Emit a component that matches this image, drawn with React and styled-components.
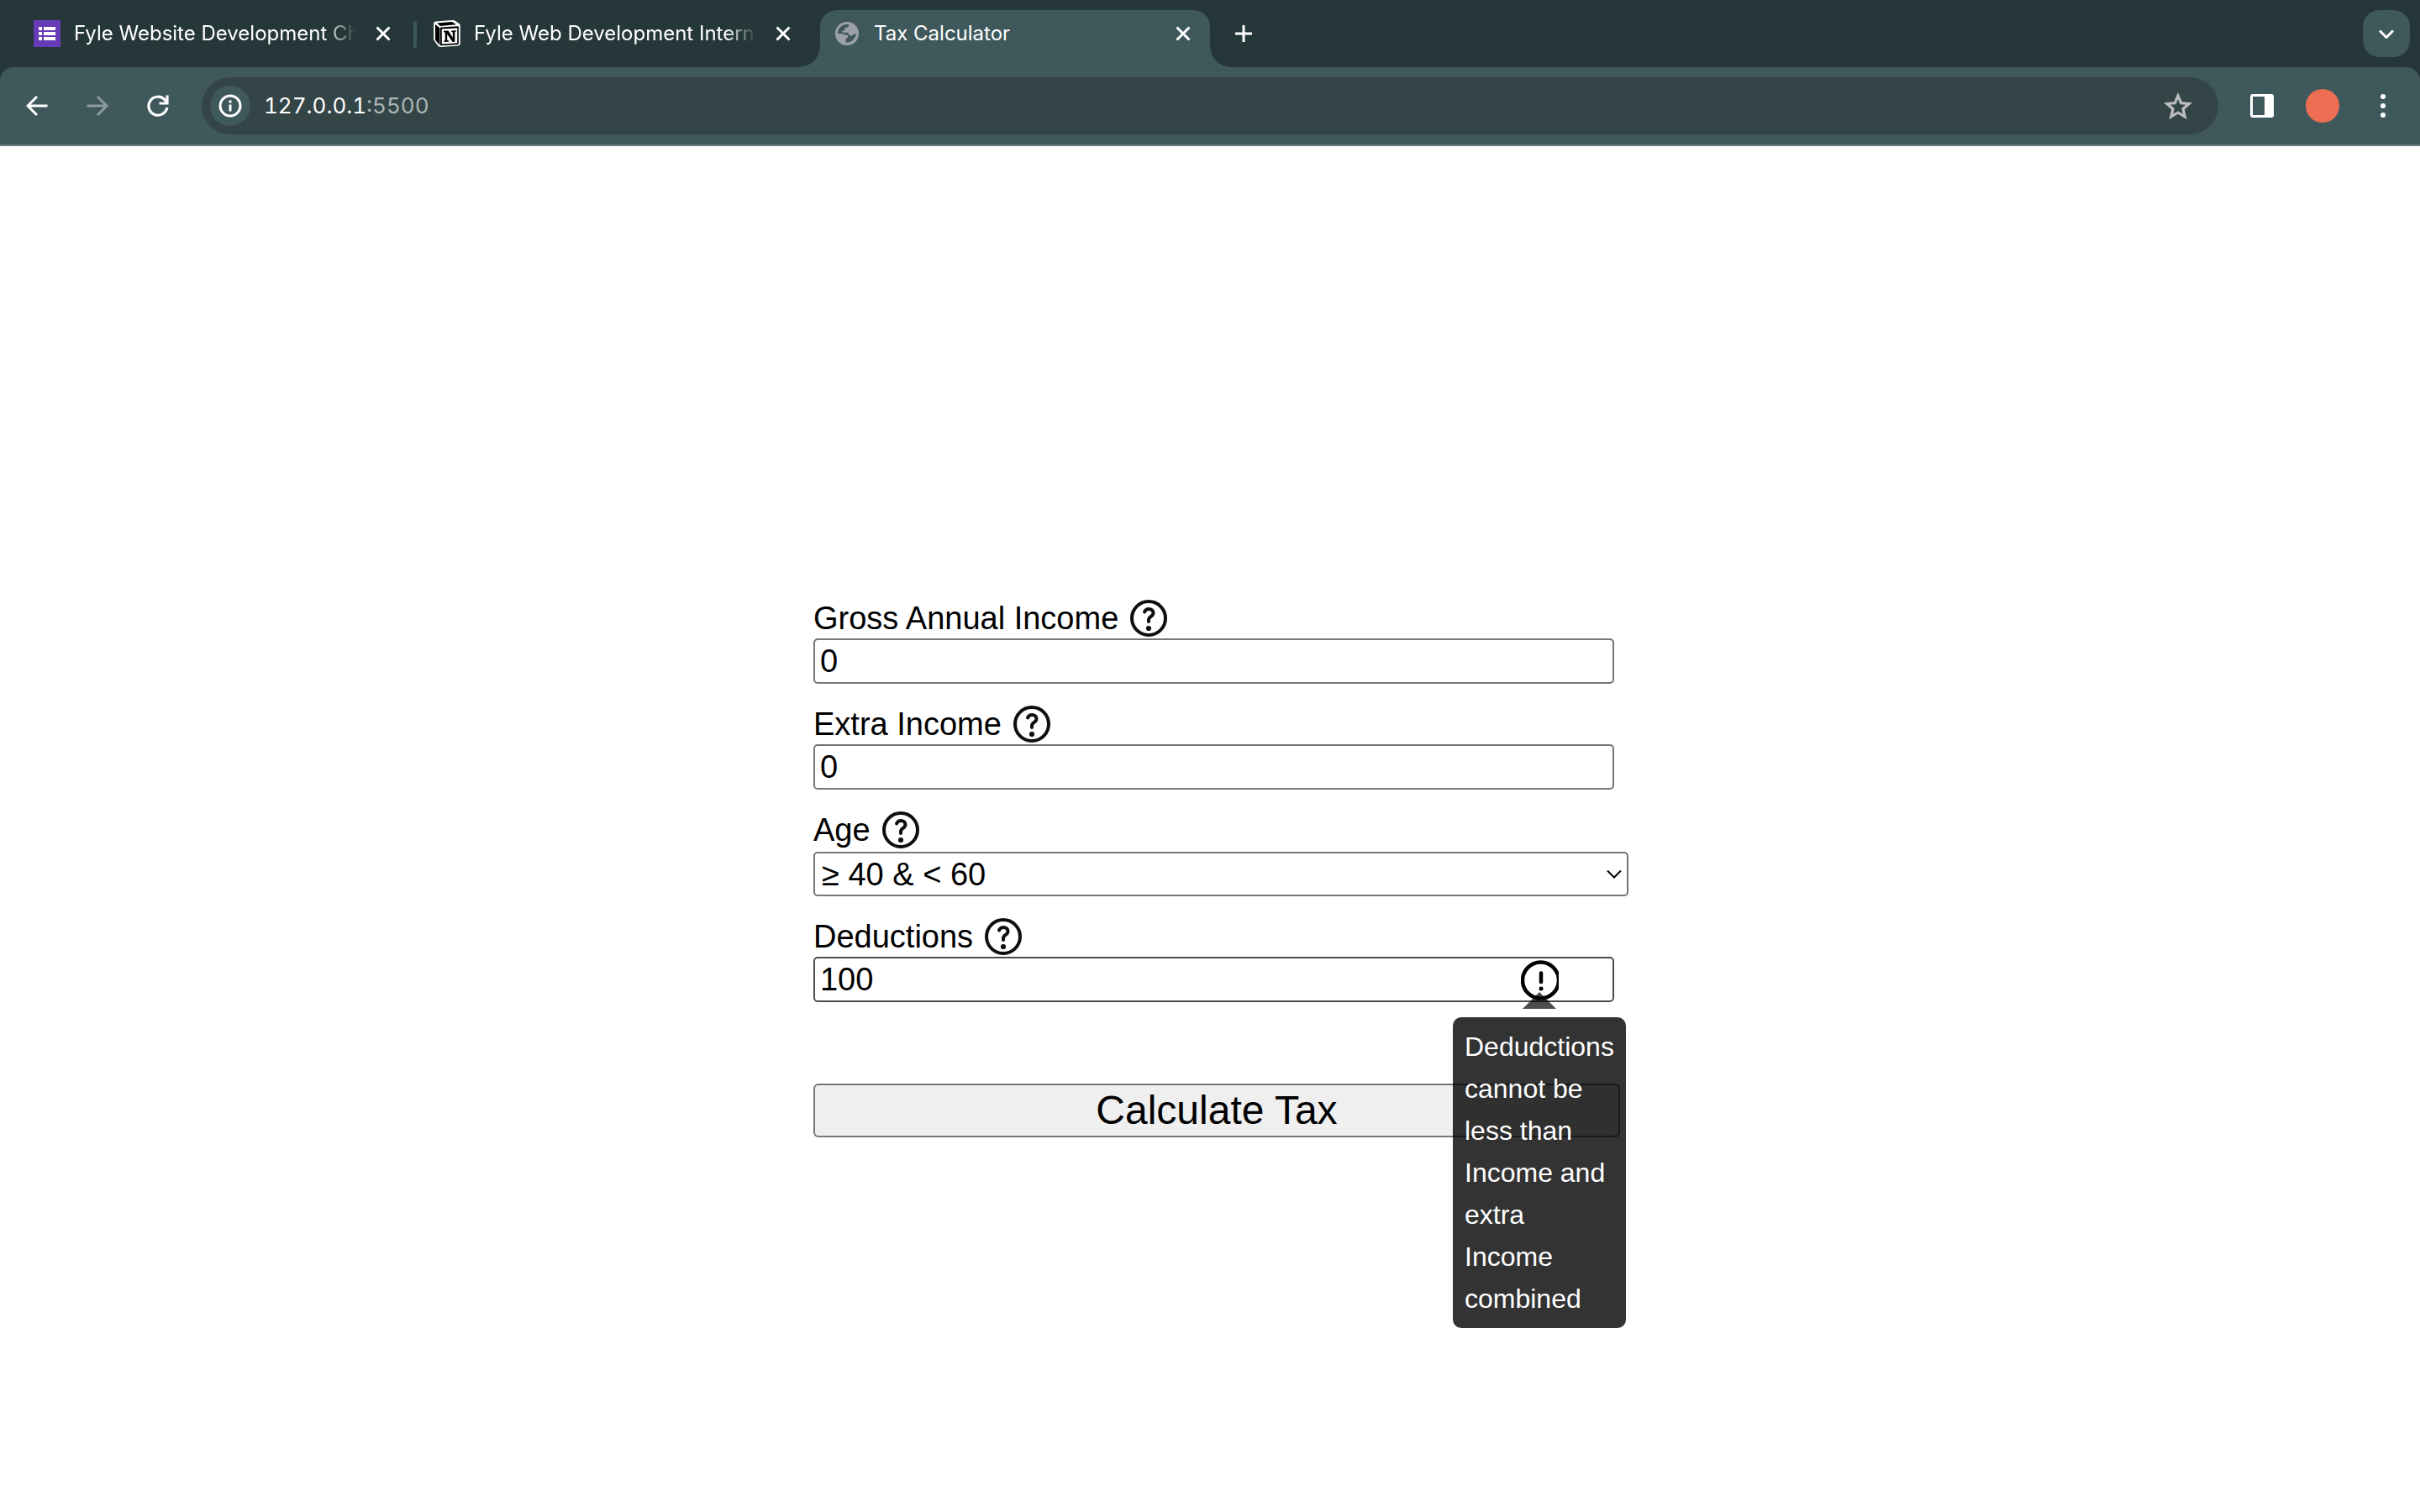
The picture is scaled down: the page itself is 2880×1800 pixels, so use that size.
import React, { useState } from "react";
import styled, { createGlobalStyle, css } from "styled-components";

const GlobalStyle = createGlobalStyle`
  * { box-sizing: border-box; }
  body { margin: 0; background: #fff; }
  button, input, select { font: inherit; margin: 0; }
`;

const uiFont = 'Inter, "Liberation Sans", sans-serif';
const pageFont = '"Liberation Sans", Arial, sans-serif';

const Window = styled.div`
  min-height: 100vh;
  display: flex;
  flex-direction: column;
`;

const TabStrip = styled.div`
  display: flex;
  align-items: flex-end;
  gap: 12px;
  height: 80px;
  padding: 0 12px 0 24px;
  background: #26373a;
  font-family: ${uiFont};
`;

const Tab = styled.div`
  position: relative;
  display: flex;
  align-items: center;
  gap: 16px;
  width: 464px;
  height: 68px;
  padding: 0 16px 12px;
  color: #fff;
  ${(p) =>
    p.$divider &&
    css`
      &::after {
        content: "";
        position: absolute;
        right: -8px;
        top: 13px;
        width: 4px;
        height: 32px;
        border-radius: 2px;
        background: #3f585b;
      }
    `}
  ${(p) =>
    p.$active &&
    css`
      background: #3f585b;
      border-radius: 20px 20px 0 0;
      &::before,
      &::after {
        content: "";
        position: absolute;
        bottom: 0;
        width: 24px;
        height: 24px;
      }
      &::before {
        right: 100%;
        background: radial-gradient(circle at 0 0, transparent 23px, #3f585b 24px);
      }
      &::after {
        left: 100%;
        background: radial-gradient(circle at 100% 0, transparent 23px, #3f585b 24px);
      }
    `}
`;

const TabTitle = styled.span`
  flex: 1;
  min-width: 0;
  overflow: hidden;
  white-space: nowrap;
  font-size: 24px;
  line-height: 32px;
  ${(p) => p.$fade && css`mask-image: linear-gradient(to right, #000 89%, transparent);`}
`;

const IconButton = styled.button`
  display: flex;
  align-items: center;
  justify-content: center;
  flex: none;
  width: ${(p) => p.$size}px;
  height: ${(p) => p.$size}px;
  padding: 0;
  border: 0;
  border-radius: ${(p) => p.$radius || 0}px;
  background: ${(p) => p.$fill || "transparent"};
  color: ${(p) => p.$color || "#fff"};
`;

const StripButton = styled(IconButton)`
  margin-bottom: 12px;
  ${(p) => p.$end && css`margin-left: auto;`}
`;

const ToolbarBack = styled.div`
  background: #26373a;
`;

const Toolbar = styled.div`
  display: flex;
  align-items: center;
  gap: 8px;
  padding: 12px;
  border-bottom: 2px solid #677f80;
  border-radius: 16px 16px 0 0;
  background: #3f585b;
  font-family: ${uiFont};
`;

const AddressBar = styled.div`
  flex: 1;
  display: flex;
  align-items: center;
  gap: 16px;
  height: 68px;
  margin: 0 12px;
  padding: 0 20px 0 10px;
  border-radius: 34px;
  background: #344548;
`;

const Url = styled.span`
  flex: 1;
  font-size: 26px;
  line-height: 36px;
  font-variant-numeric: tabular-nums;
  font-kerning: none;
  color: #fff;
  span { color: #aeb5b6; }
`;

const Avatar = styled.span`
  width: 40px;
  height: 40px;
  border-radius: 50%;
  background: #ed6e53;
`;

const Page = styled.main`
  flex: 1;
  padding-top: 540px;
  font-family: ${pageFont};
  font-size: 38px;
  color: #000;
`;

const Form = styled.form`
  width: calc(100% / 3);
  margin-left: calc(100% / 3 + 8px);
`;

const Field = styled.div`
  margin-bottom: 26px;
`;

const LabelRow = styled.div`
  display: flex;
  align-items: center;
  gap: 14px;
  padding-bottom: 2px;
  label { line-height: 44px; }
`;

const control = css`
  display: block;
  height: 54px;
  padding: 0 6px;
  border: 2px solid ${(p) => (p.$strong ? "#4c4c4c" : "#767676")};
  border-radius: 5px;
  background: #fff;
  color: #000;
  outline: none;
`;

const TextInput = styled.input`
  ${control}
  width: 100%;
`;

const InputWrap = styled.div`
  position: relative;
  width: calc(100% - 7px);
`;

const SelectWrap = styled.div`
  position: relative;
  width: calc(100% + 10px);
  margin-top: 2px;
  svg {
    position: absolute;
    right: 8px;
    top: 21px;
    pointer-events: none;
  }
`;

const Select = styled.select`
  ${control}
  width: 100%;
  height: 53px;
  padding: 0 8px;
  appearance: none;
`;

const Warning = styled.div`
  position: absolute;
  top: 4px;
  right: 66px;
  width: 45px;
  height: 48px;
  &::after {
    content: "";
    position: absolute;
    left: 2px;
    top: 38px;
    border: 20px solid transparent;
    border-top-width: 0;
    border-bottom-color: rgba(0, 0, 0, 0.7);
  }
`;

const Tooltip = styled.div`
  position: absolute;
  top: 68px;
  left: -81px;
  width: 206px;
  padding: 10px 14px;
  border-radius: 10px;
  background: rgba(0, 0, 0, 0.8);
  color: #fff;
  font-size: 32px;
  line-height: 50px;
`;

const SubmitButton = styled.button`
  display: block;
  width: 100%;
  height: 64px;
  margin-top: 97px;
  padding: 0;
  border: 2px solid #767676;
  border-radius: 6px;
  background: #efefef;
  color: #000;
  font-size: 48px;
  line-height: 56px;
`;

const line = { fill: "none", stroke: "currentColor" };

const CloseIcon = () => (
  <svg width="18" height="18" viewBox="0 0 18 18" {...line} strokeWidth="3">
    <path d="M1.5 1.5l15 15M16.5 1.5l-15 15" />
  </svg>
);

const PlusIcon = () => (
  <svg width="20" height="20" viewBox="0 0 20 20" {...line} strokeWidth="3">
    <path d="M10 0v20M0 10h20" />
  </svg>
);

const Chevron = ({ width = 18, stroke = 2 }) => (
  <svg width={width} height="11" viewBox="0 0 18 11" {...line} strokeWidth={stroke}>
    <path d="M1 1.500l8 8 8-8" />
  </svg>
);

const FormsIcon = () => (
  <svg width="32" height="32" viewBox="0 0 32 32">
    <rect width="32" height="32" rx="1" fill="#673ab7" />
    <path fill="#fff" d="M6 8h4v4H6zM12 8h14v4H12zM6 14h4v4H6zM12 14h14v4H12zM6 20h4v4H6zM12 20h14v4H12z" />
  </svg>
);

const NotionIcon = () => (
  <svg width="32" height="32" viewBox="0 0 32 32">
    <path fill="#fff" d="M3 1.500L22 0c2 0 3 .3 4.500 1.300l4 3c1 .8 1.200 1.400 1.200 2.700v20.500c0 1.800-.7 2.700-2.500 2.900L8.500 32c-1.500 0-2.300-.3-3.200-1.400L1.200 25C.4 24 .1 23 .1 22V4c0-1.400 1-2.400 2.900-2.500z" />
    <path fill="#000" d="M2 5l5 4v20.500L2 23.500zM4 3.500l18-1.500 5 3.300L8 7z" />
    <path fill="#000" d="M8.500 8.500L29 7.200c.6 0 .8.300.8.900v20c0 .7-.3 1-.9 1L8.500 30.300c-.6 0-.9-.3-.9-1V9.300c0-.5.300-.8.900-.8z" />
    <path fill="#fff" d="M9.800 10.600L28.200 9.500v17.800L9.800 28.400z" />
    <path fill="#000" d="M12 12.700l5.500-.3 5.300 8.300v-6.400l-1.600-.4v-1.400l5.600-.3v1.400l-1.500.5v11.700l-2.800.3-6.300-9.700v7.500l2 .5v1.300l-6 .3v-1.300l1.500-.5V14.600l-1.700-.4z" />
  </svg>
);

const GlobeIcon = () => (
  <svg width="32" height="32" viewBox="0 0 32 32">
    <circle cx="16" cy="16" r="14" fill="#9aa0a6" />
    <path
      fill="#3f585b"
      d="M5 16C5 9.500 10 5 16 5h2v1.500c0 1.300-1 2.300-2.300 2.300h-2v2.200c0 .9-.7 1.500-1.500 1.500h-1.700v2.200h5.800c1.200 0 2 .8 2 2v1.500h3c1 0 1.700-.7 2.500-1.500l2.800-.7c0 5-4.600 10.700-12 10.700v-3.500c0-1.200 1-2.200 2.200-2.200v-3.500h-3.500c-1.300 0-2.300-1-2.300-1.500z"
    />
  </svg>
);

const ArrowIcon = ({ flip }) => (
  <svg width="26" height="26" viewBox="0 0 26 26" {...line} strokeWidth="3">
    <path d={flip ? "M0.500 13h23M13 2l11 11-11 11" : "M25.500 13h-23M13 2L2 13l11 11"} />
  </svg>
);

const ReloadIcon = () => (
  <svg width="26" height="26" viewBox="0 0 26 26" {...line} strokeWidth="3.200">
    <path d="M23.800 15A11 11 0 1 1 20.500 5.200L23 8" />
    <path d="M24 0.500v9.500H14.500" />
  </svg>
);

const InfoIcon = () => (
  <svg width="28" height="28" viewBox="0 0 28 28" {...line} strokeWidth="3">
    <circle cx="14" cy="14" r="12" />
    <path d="M14 12.500v8M14 7.500v3" />
  </svg>
);

const StarIcon = () => (
  <svg width="34" height="32" viewBox="0 0 34 32" {...line} strokeWidth="3.200">
    <path d="M17 4l3.700 8.700 9.500.8-7.200 6.200 2.200 9.200L17 24l-8.200 4.900L11 19.700l-7.200-6.200 9.500-.8z" />
  </svg>
);

const PanelIcon = () => (
  <svg width="30" height="30" viewBox="0 0 30 30">
    <rect x="2.500" y="2.500" width="25" height="25" rx="1.500" {...line} strokeWidth="3" />
    <path d="M18 2h9v26h-9z" fill="currentColor" />
  </svg>
);

const DotsIcon = () => (
  <svg width="8" height="28" viewBox="0 0 8 28" fill="currentColor">
    <circle cx="4" cy="3" r="3" />
    <circle cx="4" cy="14" r="3" />
    <circle cx="4" cy="25" r="3" />
  </svg>
);

const HelpIcon = () => (
  <svg width="44" height="44" viewBox="0 0 44 44" {...line} stroke="#0f0f0f" strokeWidth="4">
    <circle cx="22" cy="22" r="20" />
    <path strokeLinecap="round" d="M17 14.500C18 12 20 11 22.200 11c3 0 5.300 2 5.300 4.700 0 4.300-5.500 4-5.500 8.300v2" />
    <circle cx="22" cy="34" r="3.100" fill="#0f0f0f" stroke="none" />
  </svg>
);

const AlertIcon = () => (
  <svg width="45" height="48" viewBox="0 0 45 48" {...line} stroke="#000">
    <circle cx="23.500" cy="24" r="21.500" strokeWidth="4.500" />
    <path strokeWidth="4.500" strokeLinecap="round" d="M24 15.500v10.500" />
    <circle cx="24" cy="34" r="2.500" fill="#000" stroke="none" />
  </svg>
);

const tabs = [
  { title: "Fyle Website Development Ch", Icon: FormsIcon, fade: true, divider: true },
  { title: "Fyle Web Development Interns", Icon: NotionIcon, fade: true },
  { title: "Tax Calculator", Icon: GlobeIcon, active: true },
];

function FieldLabel({ id, children }) {
  return (
    <LabelRow>
      <label htmlFor={id}>{children}</label>
      <HelpIcon />
    </LabelRow>
  );
}

export default function App() {
  const [values, setValues] = useState({ gross: "0", extra: "0", age: "mid", deductions: "100" });
  const bind = (id) => ({
    id,
    value: values[id],
    onChange: (e) => setValues({ ...values, [id]: e.target.value }),
  });

  return (
    <Window>
      <GlobalStyle />
      <TabStrip>
        {tabs.map(({ title, Icon, fade, divider, active }) => (
          <Tab key={title} $active={active} $divider={divider}>
            <Icon />
            <TabTitle $fade={fade}>{title}</TabTitle>
            <IconButton $size={32} aria-label="Close tab"><CloseIcon /></IconButton>
          </Tab>
        ))}
        <StripButton $size={56} aria-label="New tab"><PlusIcon /></StripButton>
        <StripButton $size={56} $radius={20} $fill="#3f585b" $end aria-label="Search tabs">
          <Chevron stroke={3} />
        </StripButton>
      </TabStrip>
      <ToolbarBack>
        <Toolbar>
          <IconButton $size={64} aria-label="Back"><ArrowIcon /></IconButton>
          <IconButton $size={64} $color="#8c9b9d" aria-label="Forward"><ArrowIcon flip /></IconButton>
          <IconButton $size={64} aria-label="Reload"><ReloadIcon /></IconButton>
          <AddressBar>
            <IconButton $size={48} $radius={24} $fill="#3f585b" aria-label="Site information"><InfoIcon /></IconButton>
            <Url>127.0.0.1<span>:5500</span></Url>
            <IconButton $size={56} $color="#bdbdbd" aria-label="Bookmark"><StarIcon /></IconButton>
          </AddressBar>
          <IconButton $size={64} aria-label="Side panel"><PanelIcon /></IconButton>
          <IconButton $size={64} aria-label="Profile"><Avatar /></IconButton>
          <IconButton $size={64} aria-label="Menu"><DotsIcon /></IconButton>
        </Toolbar>
      </ToolbarBack>
      <Page>
        <Form onSubmit={(e) => e.preventDefault()}>
          <Field>
            <FieldLabel id="gross">Gross Annual Income</FieldLabel>
            <InputWrap><TextInput {...bind("gross")} /></InputWrap>
          </Field>
          <Field>
            <FieldLabel id="extra">Extra Income</FieldLabel>
            <InputWrap><TextInput {...bind("extra")} /></InputWrap>
          </Field>
          <Field>
            <FieldLabel id="age">Age</FieldLabel>
            <SelectWrap>
              <Select {...bind("age")}>
                <option value="mid">≥ 40 &amp; &lt; 60</option>
              </Select>
              <Chevron />
            </SelectWrap>
          </Field>
          <Field>
            <FieldLabel id="deductions">Deductions</FieldLabel>
            <InputWrap>
              <TextInput {...bind("deductions")} $strong />
              <Warning>
                <AlertIcon />
                <Tooltip role="tooltip">
                  Dedudctions cannot be less than Income and extra Income combined
                </Tooltip>
              </Warning>
            </InputWrap>
          </Field>
          <SubmitButton type="submit">Calculate Tax</SubmitButton>
        </Form>
      </Page>
    </Window>
  );
}
